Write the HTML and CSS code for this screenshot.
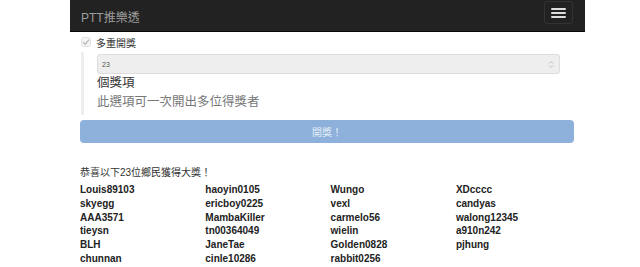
FILE: index.html
```html
<!DOCTYPE html>
<html lang="zh-Hant">
<head>
  <meta charset="UTF-8">
  <meta name="viewport" content="width=device-width, initial-scale=1.0">
  <title>PTT推樂透</title>
  <link rel="stylesheet" href="styles.css">
</head>
<body>
  <nav class="navbar">
    <span class="brand">PTT推樂透</span>
    <button class="toggle" type="button">
      <span class="bar"></span>
      <span class="bar"></span>
      <span class="bar"></span>
    </button>
  </nav>
  <main class="container">
    <label class="multi">
      <svg class="check" width="10" height="10" viewBox="0 0 10 10">
        <rect x="0.5" y="0.5" width="9" height="9" rx="2" fill="#f4f4f4" stroke="#e2e2e2"/>
        <path d="M2.2 5.2 L4.2 7.3 L8 2.6" fill="none" stroke="#b8b8b8" stroke-width="1.3"/>
      </svg>
      多重開獎
    </label>
    <div class="options">
      <div class="select">
        <span>23</span>
        <svg class="arrows" width="6" height="9" viewBox="0 0 6 9">
          <path d="M1 3.5 L3 1.5 L5 3.5 M1 5.5 L3 7.5 L5 5.5" fill="none" stroke="#b5b5b5" stroke-width="0.9"/>
        </svg>
      </div>
      <p class="unit">個獎項</p>
      <p class="hint">此選項可一次開出多位得獎者</p>
    </div>
    <button class="draw" type="button" disabled>開獎！</button>
    <p class="result">恭喜以下23位鄉民獲得大獎！</p>
    <ul class="winners">
      <li>Louis89103</li>
      <li>haoyin0105</li>
      <li>Wungo</li>
      <li>XDcccc</li>
      <li>skyegg</li>
      <li>ericboy0225</li>
      <li>vexl</li>
      <li>candyas</li>
      <li>AAA3571</li>
      <li>MambaKiller</li>
      <li>carmelo56</li>
      <li>walong12345</li>
      <li>tieysn</li>
      <li>tn00364049</li>
      <li>wielin</li>
      <li>a910n242</li>
      <li>BLH</li>
      <li>JaneTae</li>
      <li>Golden0828</li>
      <li>pjhung</li>
      <li>chunnan</li>
      <li>cinle10286</li>
      <li>rabbit0256</li>
    </ul>
  </main>
</body>
</html>
```

FILE: styles.css
```css
body {
    margin: 0;
    font-family: "Liberation Sans", "Noto Sans CJK TC", sans-serif;
    color: #333;
    background-color: #fff;
}
.navbar {
    margin-left: 70px;
    width: 515px;
    height: 32px;
    box-sizing: border-box;
    background-color: #222;
    border-bottom: 1px solid #080808;
    display: flex;
    align-items: center;
    justify-content: space-between;
    padding: 0 12px 0 11px;
}
.brand {
    font-size: 12px;
    color: #9d9d9d;
    margin-top: 1px;
}
.toggle {
    width: 29px;
    height: 23px;
    margin-top: -6px;
    background: transparent;
    border: 1px solid #333;
    border-radius: 3px;
    display: flex;
    flex-direction: column;
    align-items: center;
    justify-content: center;
    gap: 2px;
    padding: 0;
}
.toggle .bar {
    width: 15px;
    height: 2px;
    background-color: #ddd;
    border-radius: 1px;
}
.container {
    margin-left: 80px;
    width: 494px;
}
.multi {
    display: flex;
    align-items: center;
    gap: 5px;
    height: 20px;
    font-size: 10px;
    color: #333;
}
.check {
    margin-left: 1px;
}
.options {
    border-left: 3px solid #eee;
    margin-left: 1px;
    padding: 2px 14px 2px 13px;
}
.select {
    height: 20px;
    box-sizing: border-box;
    background-color: #eee;
    border: 1px solid #ddd;
    border-radius: 3px;
    display: flex;
    align-items: center;
    justify-content: space-between;
    padding: 0 5px 0 4px;
    font-size: 7px;
    color: #555;
}
.unit {
    margin: 0;
    font-size: 12.5px;
    line-height: 18px;
    color: #333;
}
.hint {
    margin: 0;
    font-size: 12.5px;
    line-height: 21px;
    color: #777;
}
.draw {
    display: block;
    width: 100%;
    height: 23px;
    margin-top: 5px;
    border: none;
    border-radius: 4px;
    background-color: #8db1da;
    color: #e4edf7;
    font-family: inherit;
    font-size: 10px;
}
.result {
    margin: 22px 0 0;
    font-size: 10px;
    line-height: 15px;
}
.winners {
    list-style-type: none;
    margin: 3px 0 0;
    padding: 0;
    display: grid;
    grid-template-columns: repeat(4, 125.3px);
}
.winners li {
    font-size: 10px;
    font-weight: bold;
    line-height: 13.8px;
    color: #222;
}
```
